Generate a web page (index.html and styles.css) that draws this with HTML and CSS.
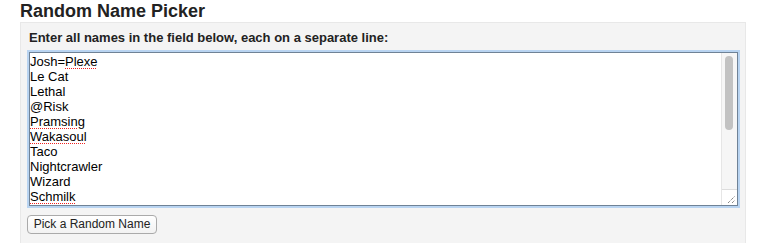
FILE: index.html
```html
<!DOCTYPE html>
<html>
<head>
<meta charset="utf-8">
<link rel="stylesheet" href="styles.css">
</head>
<body>
<h1 class="title">Random Name Picker</h1>
<div class="panel">
  <div class="label">Enter all names in the field below, each on a separate line:</div>
  <div class="field">
    <div class="names">
      <div>Josh=<span class="sp">Plexe</span></div>
      <div>Le Cat</div>
      <div>Lethal</div>
      <div>@Risk</div>
      <div><span class="sp">Pramsing</span></div>
      <div><span class="sp">Wakasoul</span></div>
      <div>Taco</div>
      <div>Nightcrawler</div>
      <div>Wizard</div>
      <div><span class="sp">Schmilk</span></div>
    </div>
    <div class="scroll">
      <div class="track"><div class="thumb"></div></div>
      <div class="grip">
        <svg width="15" height="15" viewBox="0 0 15 15"><path d="M6 13 L13 6 M10 13 L13 10" stroke="#555" stroke-width="1" stroke-dasharray="1 1" fill="none"/></svg>
      </div>
    </div>
  </div>
  <button class="btn">Pick a Random Name</button>
</div>
</body>
</html>
```
FILE: styles.css
```css
html, body {
  margin: 0;
  padding: 0;
  background: #ffffff;
  font-family: "Liberation Sans", Arial, sans-serif;
  color: #111;
  height: 243px;
  overflow: hidden;
}
.title {
  margin: 0 0 0 20px;
  padding-top: 1px;
  font-size: 18px;
  line-height: 21px;
  font-weight: bold;
  color: #222;
}
.panel {
  margin-left: 20px;
  width: 726px;
  height: 221px;
  background: #f4f4f4;
  border: 1px solid #e8e8e8;
  border-bottom: none;
  padding: 7px 0 0 7px;
  box-sizing: border-box;
}
.label {
  font-size: 13px;
  font-weight: bold;
  line-height: 16px;
  color: #222;
  margin-left: 1px;
}
.field {
  margin-top: 6px;
  margin-left: 1px;
  width: 709px;
  height: 154px;
  box-sizing: border-box;
  border: 1px solid #6f8296;
  box-shadow: 0 0 0 2px #b9d4f1;
  background: #fff;
  display: flex;
}
.names {
  flex: 1;
  padding: 1px 0 0 0;
  font-size: 13px;
  line-height: 15px;
  color: #000;
  overflow: hidden;
}
.sp {
  text-decoration: underline dotted #e22;
  text-decoration-thickness: 1px;
  text-underline-offset: 2px;
}
.scroll {
  width: 15px;
  display: flex;
  flex-direction: column;
  background: #f6f6f6;
  border-left: 1px solid #e6e6e6;
}
.track {
  flex: 1;
  padding: 3px 3px 0 3px;
}
.thumb {
  width: 8px;
  height: 74px;
  border-radius: 4px;
  background: #c2c2c2;
}
.grip {
  height: 15px;
  border-top: 1px solid #ddd;
  background: #fff;
}
.grip svg { display: block; }
.btn {
  display: block;
  margin-top: 9px;
  margin-left: -1px;
  font-family: "Liberation Sans", Arial, sans-serif;
  font-size: 12px;
  height: 19px;
  width: 130px;
  padding: 0;
  border: 1px solid #aaa;
  border-radius: 4px;
  background: linear-gradient(#ffffff, #f2f2f2);
  color: #222;
  line-height: 17px;
  text-align: center;
}
```
